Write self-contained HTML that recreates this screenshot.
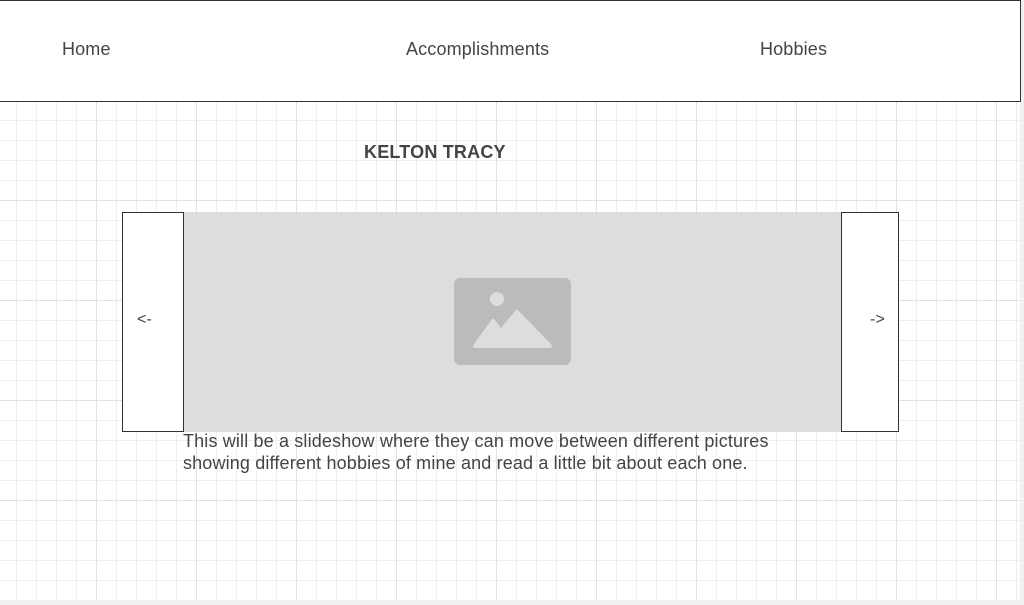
<!DOCTYPE html>
<html><head><style>
body{margin:0;width:1024px;height:605px;background:#f1f1f1;position:relative;overflow:hidden;font-family:"Liberation Sans",sans-serif;}
.grid{position:absolute;left:0;top:0;width:1020px;height:600px;background-color:#fff;
background-image:linear-gradient(90deg,#e2e2e2 1px,transparent 1px),linear-gradient(#e2e2e2 1px,transparent 1px),linear-gradient(90deg,#eeeeee 1px,transparent 1px),linear-gradient(#eeeeee 1px,transparent 1px);
background-size:100px 100px,100px 100px,20px 20px,20px 20px;background-position:-4px 0,0 0,-4px 0,0 0;}
.hdr{position:absolute;left:-1px;top:0;width:1020px;height:100px;background:#fff;border:1px solid #333;}
.t{position:absolute;color:#444;font-size:18px;letter-spacing:0.15px;}
.box{position:absolute;background:#fff;border:1px solid #333;box-sizing:border-box;}
</style></head><body>
<div class="grid"></div>
<div class="hdr"></div>
<div class="t" style="left:62px;top:39px">Home</div>
<div class="t" style="left:406px;top:39px">Accomplishments</div>
<div class="t" style="left:760px;top:39px">Hobbies</div>
<div class="t" style="left:364px;top:142px;font-weight:bold;font-size:18px;letter-spacing:0.2px">KELTON TRACY</div>
<div style="position:absolute;left:184px;top:212px;width:657px;height:220px;background:#dddddd"></div>
<svg style="position:absolute;left:454px;top:278px" width="117" height="87" viewBox="0 0 117 87">
<rect width="117" height="87" rx="6" fill="#bbbbbb"/>
<circle cx="43" cy="21" r="7" fill="#dddddd"/>
<path d="M21 68 L39 43 L47 53 L63 34 L96 68 Z" fill="#dddddd" stroke="#dddddd" stroke-width="4" stroke-linejoin="round"/>
</svg>
<div class="box" style="left:122px;top:212px;width:62px;height:220px"></div>
<div class="box" style="left:841px;top:212px;width:58px;height:220px"></div>
<div class="t" style="left:137px;top:311px;font-size:16px">&lt;-</div>
<div class="t" style="left:870px;top:311px;font-size:16px">-&gt;</div>
<div class="t" style="left:183px;top:430px;line-height:22px;letter-spacing:0.15px">This will be a slideshow where they can move between different pictures<br>showing different hobbies of mine and read a little bit about each one.</div>
</body></html>
